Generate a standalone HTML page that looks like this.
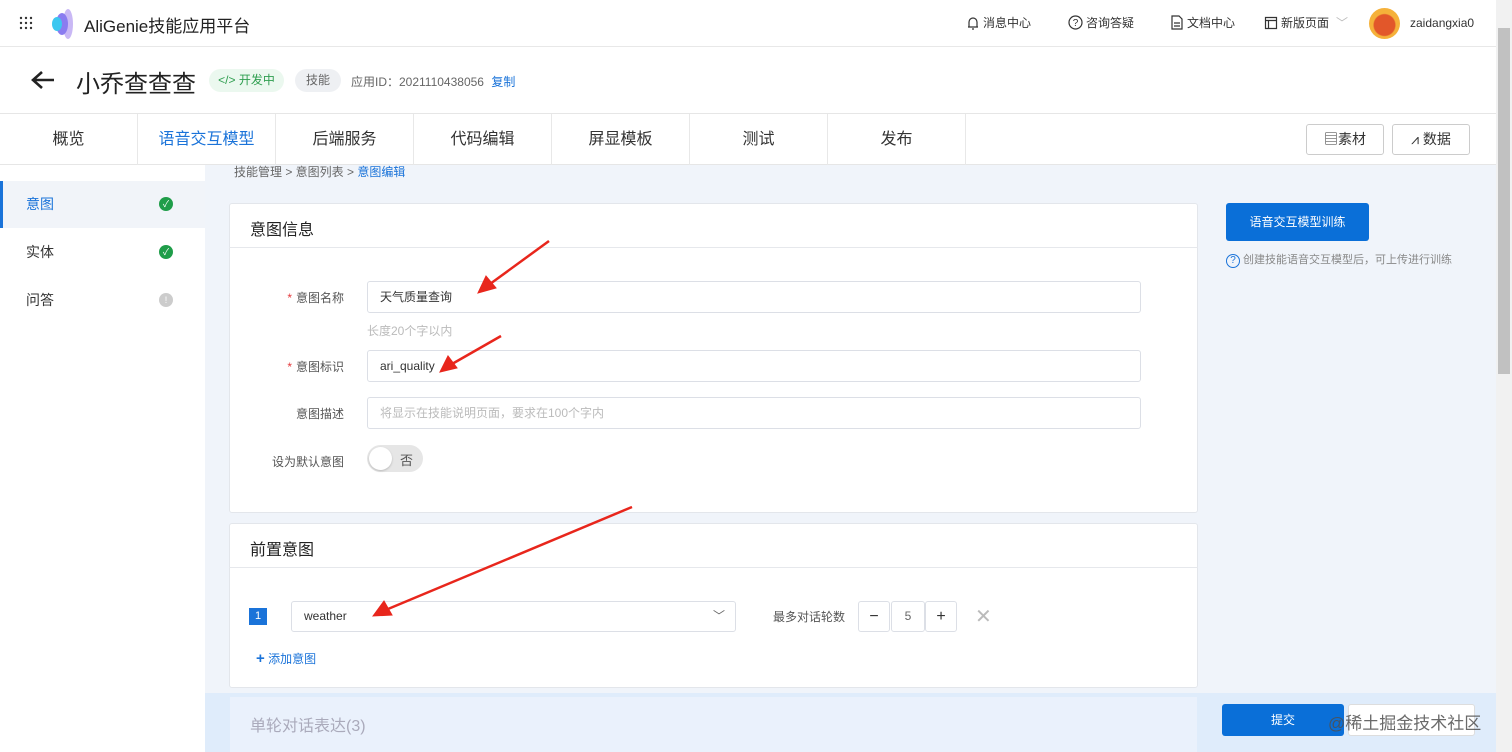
<!DOCTYPE html>
<html><head><meta charset="utf-8"><style>
*{box-sizing:border-box;margin:0;padding:0}
body{width:1512px;height:752px;overflow:hidden;background:#f0f4fa;font-family:"Liberation Sans","Noto Sans CJK SC",sans-serif;color:#333;position:relative;font-size:12px}
.a{position:absolute}
.top{left:0;top:0;width:1496px;height:47px;background:#fff;border-bottom:1px solid #e8e8e8}
.hdr{left:0;top:47px;width:1496px;height:66px;background:#fff}
.tabs{left:0;top:113px;width:1496px;height:52px;background:#fff;border-top:1px solid #e6e6e6;border-bottom:1px solid #e6e6e6}
.tab{position:absolute;top:0;height:51px;width:138px;border-right:1px solid #e8e8e8;text-align:center;line-height:52px;font-size:16px;color:#333}
.side{left:0;top:165px;width:205px;height:587px;background:#fff}
.card{background:#fff;border:1px solid #e3e6eb;border-radius:3px}
.inp{position:absolute;left:367px;width:774px;height:32px;border:1px solid #dcdfe6;border-radius:3px;padding-left:12px;line-height:30px;font-size:12px;background:#fff}
.lbl{position:absolute;width:120px;left:224px;text-align:right;font-size:12px;color:#555}
.lbl b{color:#e4393c;font-weight:normal;margin-right:4px}
.btn{position:absolute;border:1px solid #ccc;border-radius:3px;background:#fff;text-align:center}
.nav{position:absolute;top:14px;font-size:12px;color:#333;display:flex;align-items:center;gap:3px}
</style></head><body>
<div class="a top"></div>
<div class="a" style="left:19px;top:16px;width:14px;height:14px">
<svg width="14" height="14"><g fill="#333"><circle cx="2" cy="2" r="1.2"/><circle cx="7" cy="2" r="1.2"/><circle cx="12" cy="2" r="1.2"/><circle cx="2" cy="7" r="1.2"/><circle cx="7" cy="7" r="1.2"/><circle cx="12" cy="7" r="1.2"/><circle cx="2" cy="12" r="1.2"/><circle cx="7" cy="12" r="1.2"/><circle cx="12" cy="12" r="1.2"/></g></svg></div>
<svg class="a" style="left:48px;top:8px" width="26" height="32"><ellipse cx="20" cy="16" rx="5" ry="15" fill="#c9b8f5"/><ellipse cx="14" cy="16" rx="6" ry="11" fill="#8a7cf0"/><ellipse cx="9" cy="16" rx="5" ry="7" fill="#3cc7f0"/></svg>
<div class="a" style="left:84px;top:12px;font-size:17px;color:#222">AliGenie技能应用平台</div>
<div class="nav" style="left:966px"><svg width="14" height="14"><path d="M3 11V6a4 4 0 018 0v5zM2 11h10M6 13h2" stroke="#333" fill="none" stroke-width="1.2"/></svg>消息中心</div>
<div class="nav" style="left:1068px"><svg width="15" height="15"><circle cx="7.5" cy="7.5" r="6.5" stroke="#333" fill="none" stroke-width="1.2"/><text x="7.5" y="11" font-size="10" text-anchor="middle" fill="#333">?</text></svg>咨询答疑</div>
<div class="nav" style="left:1170px"><svg width="14" height="15"><path d="M2 1h7l3 3v10H2zM4 8h6M4 11h6" stroke="#333" fill="none" stroke-width="1.2"/></svg>文档中心</div>
<div class="nav" style="left:1264px"><svg width="14" height="14"><path d="M1.5 1.5h11v11h-11zM1.5 4.5h11M4.5 4.5v8" stroke="#333" fill="none" stroke-width="1.2"/></svg>新版页面 <span style="color:#bbb;margin-left:4px">﹀</span></div>
<div class="a" style="left:1369px;top:8px;width:31px;height:31px;border-radius:50%;background:radial-gradient(circle at 50% 55%,#e2572a 45%,#f5b13a 50%)"></div>
<div class="a" style="left:1410px;top:16px;font-size:12px;color:#333">zaidangxia0</div>

<div class="a hdr"></div>
<svg class="a" style="left:30px;top:70px" width="26" height="20"><path d="M24 10H4M12 2L3 10l9 8" stroke="#222" stroke-width="2.6" fill="none"/></svg>
<div class="a" style="left:76px;top:64px;font-size:24px;color:#222">小乔查查查</div>
<div class="a" style="left:209px;top:69px;width:75px;height:23px;border-radius:12px;background:#ebf8ef;color:#2e9e4f;font-size:12px;line-height:23px;text-align:center">&lt;/&gt; 开发中</div>
<div class="a" style="left:295px;top:69px;width:46px;height:23px;border-radius:12px;background:#eef0f3;color:#666;font-size:12px;line-height:23px;text-align:center">技能</div>
<div class="a" style="left:351px;top:73px;font-size:12px;color:#666">应用ID：2021110438056 <span style="color:#1a73d9;margin-left:4px">复制</span></div>

<div class="a tabs">
<div class="tab" style="left:0">概览</div>
<div class="tab" style="left:138px;color:#1a73d9">语音交互模型</div>
<div class="tab" style="left:276px">后端服务</div>
<div class="tab" style="left:414px">代码编辑</div>
<div class="tab" style="left:552px">屏显模板</div>
<div class="tab" style="left:690px">测试</div>
<div class="tab" style="left:828px">发布</div>
<div class="btn" style="left:1306px;top:10px;width:78px;height:31px;line-height:29px;font-size:14px">▤素材</div>
<div class="btn" style="left:1392px;top:10px;width:78px;height:31px;line-height:29px;font-size:14px">⩘ 数据</div>
</div>

<div class="a side"></div>
<div class="a" style="left:0;top:181px;width:205px;height:47px;background:#f1f4f9;border-left:3px solid #1a73d9"></div>
<div class="a" style="left:26px;top:194px;font-size:14px;color:#1a73d9">意图</div>
<div class="a" style="left:26px;top:242px;font-size:14px">实体</div>
<div class="a" style="left:26px;top:290px;font-size:14px">问答</div>
<div class="a" style="left:159px;top:197px;width:14px;height:14px;border-radius:50%;background:#1f9d49;color:#fff;font-size:9px;text-align:center;line-height:14px">✓</div>
<div class="a" style="left:159px;top:245px;width:14px;height:14px;border-radius:50%;background:#1f9d49;color:#fff;font-size:9px;text-align:center;line-height:14px">✓</div>
<div class="a" style="left:159px;top:293px;width:14px;height:14px;border-radius:50%;background:#ccc;color:#fff;font-size:9px;text-align:center;line-height:14px">!</div>

<div class="a" style="left:234px;top:163px;font-size:12px;color:#666">技能管理 &gt; 意图列表 &gt; <span style="color:#1a73d9">意图编辑</span></div>

<div class="a card" style="left:229px;top:203px;width:969px;height:310px"></div>
<div class="a" style="left:229px;top:247px;width:969px;height:1px;background:#e6e8ec"></div>
<div class="a" style="left:250px;top:216px;font-size:16px;color:#222">意图信息</div>
<div class="lbl" style="top:289px"><b>*</b>意图名称</div>
<div class="inp" style="top:281px">天气质量查询</div>
<div class="a" style="left:367px;top:322px;font-size:12px;color:#bbb">长度20个字以内</div>
<div class="lbl" style="top:358px"><b>*</b>意图标识</div>
<div class="inp" style="top:350px">ari_quality</div>
<div class="lbl" style="top:405px">意图描述</div>
<div class="inp" style="top:397px;color:#bbb">将显示在技能说明页面，要求在100个字内</div>
<div class="lbl" style="top:453px">设为默认意图</div>
<div class="a" style="left:367px;top:445px;width:56px;height:27px;border-radius:14px;background:#e6e6e6"><div style="position:absolute;left:2px;top:2px;width:23px;height:23px;border-radius:50%;background:#fff;box-shadow:0 1px 2px rgba(0,0,0,.2)"></div><span style="position:absolute;left:33px;top:5px;font-size:13px;color:#555">否</span></div>

<div class="a card" style="left:229px;top:523px;width:969px;height:165px"></div>
<div class="a" style="left:229px;top:567px;width:969px;height:1px;background:#e6e8ec"></div>
<div class="a" style="left:250px;top:536px;font-size:16px;color:#222">前置意图</div>
<div class="a" style="left:249px;top:608px;width:18px;height:17px;background:#1a73d9;color:#fff;font-size:11px;text-align:center;line-height:17px">1</div>
<div class="a" style="left:291px;top:601px;width:445px;height:31px;border:1px solid #dcdfe6;border-radius:3px;padding-left:12px;line-height:29px;font-size:12px">weather<span style="position:absolute;right:10px;color:#666">﹀</span></div>
<div class="a" style="left:773px;top:608px;font-size:12px;color:#555">最多对话轮数</div>
<div class="btn" style="left:858px;top:601px;width:32px;height:31px;line-height:29px;font-size:16px;border-color:#dcdfe6">−</div>
<div class="btn" style="left:891px;top:601px;width:34px;height:31px;line-height:29px;font-size:12px;border-color:#dcdfe6;color:#666">5</div>
<div class="btn" style="left:925px;top:601px;width:32px;height:31px;line-height:29px;font-size:16px;border-color:#dcdfe6">+</div>
<div class="a" style="left:975px;top:604px;font-size:20px;color:#bbb">✕</div>
<div class="a" style="left:256px;top:650px;font-size:12px;color:#1a73d9"><b style="font-size:15px">+</b> 添加意图</div>

<div class="a" style="left:1226px;top:203px;width:143px;height:38px;background:#0a6fd8;border-radius:3px;color:#fff;font-size:12px;text-align:center;line-height:38px">语音交互模型训练</div>
<div class="a" style="left:1226px;top:251px;font-size:11px;color:#888"><span style="display:inline-block;width:14px;height:14px;border:1px solid #1a73d9;color:#1a73d9;border-radius:50%;font-size:10px;text-align:center;line-height:12px">?</span> 创建技能语音交互模型后，可上传进行训练</div>

<div class="a" style="left:205px;top:693px;width:1291px;height:59px;background:rgba(220,234,250,.85)"></div>
<div class="a" style="left:230px;top:697px;width:967px;height:55px;background:rgba(236,243,252,.8)"></div>
<div class="a" style="left:250px;top:712px;font-size:16px;color:#aab">单轮对话表达(3)</div>
<div class="a" style="left:1222px;top:704px;width:122px;height:32px;background:#0a6fd8;border-radius:3px;color:#fff;font-size:12px;text-align:center;line-height:32px">提交</div>
<div class="a" style="left:1348px;top:704px;width:127px;height:32px;background:#fff;border:1px solid #ddd;border-radius:3px"></div>
<div class="a" style="left:1328px;top:709px;font-size:17px;color:rgba(80,80,80,.85)">@稀土掘金技术社区</div>

<div class="a" style="left:1496px;top:0;width:16px;height:752px;background:#f1f1f1"></div>
<div class="a" style="left:1498px;top:28px;width:12px;height:346px;background:#c1c1c1"></div>

<svg class="a" style="left:0;top:0" width="1512" height="752">
<g fill="#e8261c" stroke="#e8261c">
<line x1="549" y1="241" x2="490" y2="284" stroke-width="2.5"/><polygon points="478,293 486,276 496,288"/>
<line x1="501" y1="336" x2="452" y2="364" stroke-width="2.5"/><polygon points="440,372 448,356 457,368"/>
<line x1="632" y1="507" x2="388" y2="609" stroke-width="2.5"/><polygon points="373,616 384,601 392,615"/>
</g></svg>
</body></html>
